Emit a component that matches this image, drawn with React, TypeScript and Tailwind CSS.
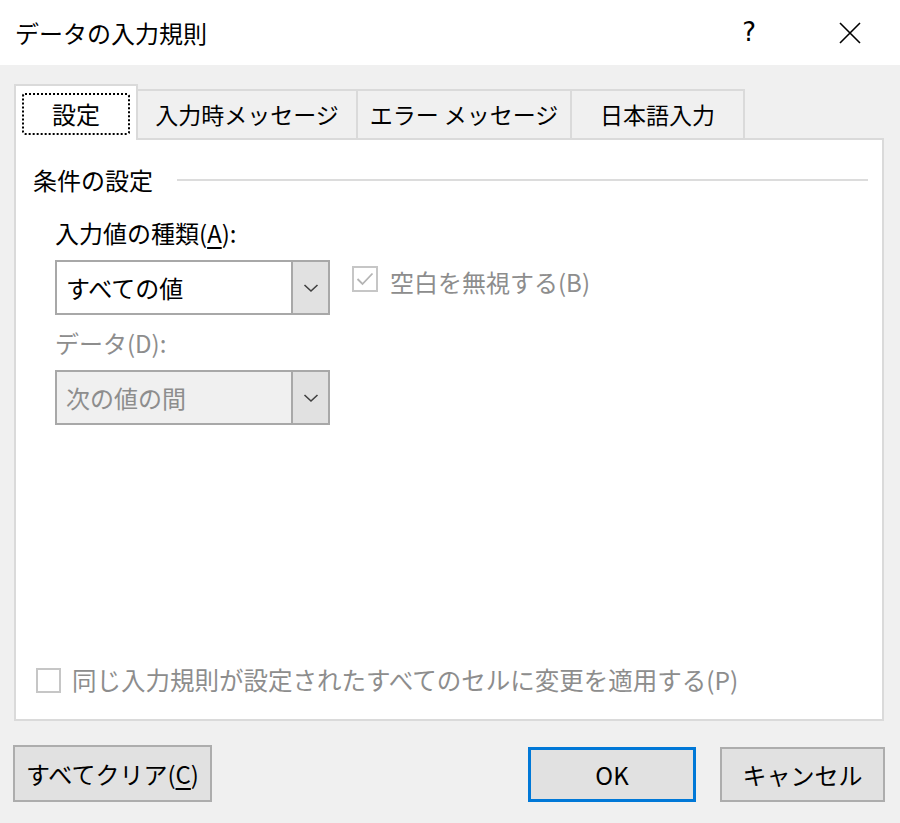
import React from 'react'

const font = { fontFamily: '"Noto Sans CJK JP", "Noto Sans", sans-serif' }

function Chevron({ color = '#404040' }: { color?: string }) {
  return (
    <svg width="16" height="10" viewBox="0 0 16 10" fill="none">
      <path d="M1.5 2 L8 8 L14.5 2" stroke={color} strokeWidth="1.6" />
    </svg>
  )
}

function Combo({ value, disabled }: { value: string; disabled?: boolean }) {
  return (
    <div
      className={`flex h-[55px] w-[275px] border-2 border-[#a8a8a8] ${
        disabled ? 'bg-[#f0f0f0] text-[#8d8d8d]' : 'bg-white text-black'
      }`}
    >
      <div className="flex flex-1 items-center pl-[9px] text-[24px]">{value}</div>
      <div className="flex w-[37px] items-center justify-center border-l-2 border-[#a8a8a8] bg-[#e1e1e1]">
        <Chevron />
      </div>
    </div>
  )
}

function Tab({ label, w }: { label: string; w: number }) {
  return (
    <div
      className="flex h-[49px] items-center justify-center border-2 border-b-0 border-l-0 border-[#dadada] bg-[#f0f0f0] text-[23px] text-black"
      style={{ width: w }}
    >
      {label}
    </div>
  )
}

export default function App() {
  return (
    <div className="flex h-[823px] w-[900px] flex-col bg-[#f0f0f0]" style={font}>
      {/* Title bar */}
      <div className="flex h-[65px] items-center bg-white pl-[15px]">
        <span className="text-[24px] text-black">データの入力規則</span>
        <span className="ml-auto mr-[82px] text-[26px] text-black" style={{ fontFamily: '"DejaVu Sans", sans-serif' }}>
          ?
        </span>
        <svg width="24" height="24" viewBox="0 0 24 24" className="mr-[38px]">
          <path d="M2 2 L22 22 M22 2 L2 22" stroke="#000" strokeWidth="1.6" />
        </svg>
      </div>

      <div className="flex flex-1 flex-col pl-[14px] pr-[16px] pt-[19px]">
        {/* Tabs */}
        <div className="relative z-10 flex items-end">
          <div className="-mb-[2px] flex h-[56px] w-[124px] items-start border-2 border-b-0 border-[#dadada] bg-white px-[6px] pt-[7px]">
            <div className="flex h-[42px] w-full items-center justify-center rounded-[3px] border-2 border-dotted border-black text-[24px] text-black">
              設定
            </div>
          </div>
          <Tab label="入力時メッセージ" w={220} />
          <Tab label="エラー メッセージ" w={214} />
          <Tab label="日本語入力" w={173} />
        </div>

        {/* Panel */}
        <div className="flex h-[583px] flex-col border-2 border-[#dadada] bg-white">
          <div className="mt-[25px] flex h-[30px] items-center pl-[17px]">
            <span className="text-[24px] text-black">条件の設定</span>
            <div className="ml-[24px] mr-[14px] h-[2px] flex-1 bg-[#dcdcdc]" />
          </div>

          <div className="ml-[39px] mt-[23px] flex h-[30px] items-center text-[24px] text-black">
            入力値の種類(<span className="underline underline-offset-4">A</span>):
          </div>

          <div className="ml-[39px] mt-[12px] flex items-start">
            <Combo value="すべての値" />
            <div className="ml-[22px] mt-[6px] flex h-[26px] w-[26px] items-center justify-center border-2 border-[#c6c6c6]">
              <svg width="18" height="14" viewBox="0 0 18 14" fill="none">
                <path d="M1.5 7 L6.5 12 L16.5 1.5" stroke="#b4b4b4" strokeWidth="1.8" />
              </svg>
            </div>
            <span className="ml-[12px] mt-[4px] text-[24px] text-[#8d8d8d]">空白を無視する(B)</span>
          </div>

          <div className="ml-[39px] mt-[13px] flex h-[30px] items-center text-[24px] text-[#8d8d8d]">
            データ(D):
          </div>

          <div className="ml-[39px] mt-[12px]">
            <Combo value="次の値の間" disabled />
          </div>

          <div className="mb-[24px] ml-[20px] mt-auto flex h-[30px] items-center">
            <div className="h-[25px] w-[25px] border-2 border-[#c6c6c6] bg-white" />
            <span className="ml-[11px] text-[24.5px] text-[#8d8d8d]">
              同じ入力規則が設定されたすべてのセルに変更を適用する(P)
            </span>
          </div>
        </div>

        {/* Buttons */}
        <div className="mt-[24px] flex items-start">
          <button className="-ml-[1px] flex h-[57px] w-[199px] items-center justify-center border-2 border-[#adadad] bg-[#e1e1e1] text-[24px] text-black">
            すべてクリア(<span className="underline underline-offset-4">C</span>)
          </button>
          <button className="ml-auto mt-[2px] flex h-[55px] w-[168px] items-center justify-center border-[3px] border-[#0078d7] bg-[#e1e1e1] text-[24px] text-black">
            OK
          </button>
          <button className="ml-[24px] -mr-[1px] mt-[2px] flex h-[55px] w-[165px] items-center justify-center border-2 border-[#adadad] bg-[#e1e1e1] text-[24px] text-black">
            キャンセル
          </button>
        </div>
      </div>
    </div>
  )
}
